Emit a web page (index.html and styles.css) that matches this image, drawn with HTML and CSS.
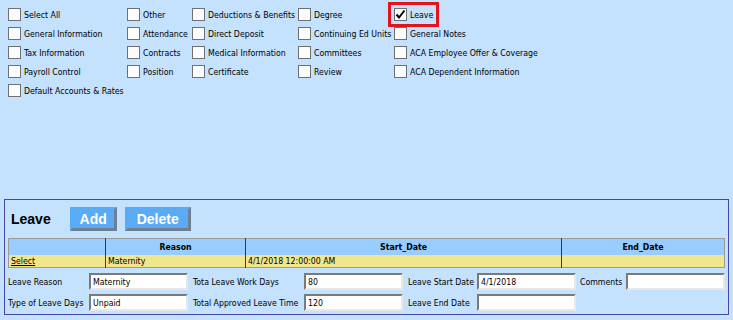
FILE: index.html
```html
<!DOCTYPE html>
<html>
<head>
    <title>Employee Sections</title>
    <link rel="stylesheet" href="styles.css">
</head>
<body>
    <div class="options">
        <label class="opt"><span class="box"></span>Select All</label>
        <label class="opt"><span class="box"></span>Other</label>
        <label class="opt"><span class="box"></span>Deductions &amp; Benefits</label>
        <label class="opt"><span class="box"></span>Degree</label>
        <label class="opt picked"><span class="box"><svg width="13" height="13" viewBox="0 0 13 13"><path d="M2.5 6.5 L5 9.5 L10.5 2.5" fill="none" stroke="#000" stroke-width="2"/></svg></span>Leave</label>

        <label class="opt"><span class="box"></span>General Information</label>
        <label class="opt"><span class="box"></span>Attendance</label>
        <label class="opt"><span class="box"></span>Direct Deposit</label>
        <label class="opt"><span class="box"></span>Continuing Ed Units</label>
        <label class="opt"><span class="box"></span>General Notes</label>

        <label class="opt"><span class="box"></span>Tax Information</label>
        <label class="opt"><span class="box"></span>Contracts</label>
        <label class="opt"><span class="box"></span>Medical Information</label>
        <label class="opt"><span class="box"></span>Committees</label>
        <label class="opt"><span class="box"></span>ACA Employee Offer &amp; Coverage</label>

        <label class="opt"><span class="box"></span>Payroll Control</label>
        <label class="opt"><span class="box"></span>Position</label>
        <label class="opt"><span class="box"></span>Certificate</label>
        <label class="opt"><span class="box"></span>Review</label>
        <label class="opt"><span class="box"></span>ACA Dependent Information</label>

        <label class="opt"><span class="box"></span>Default Accounts &amp; Rates</label>
    </div>

    <div class="panel">
        <div class="panel-head">
            <h2>Leave</h2>
            <button class="btn">Add</button>
            <button class="btn">Delete</button>
        </div>

        <table class="grid">
            <colgroup>
                <col class="c1"><col class="c2"><col class="c3"><col class="c4">
            </colgroup>
            <tr class="head">
                <th></th>
                <th>Reason</th>
                <th>Start_Date</th>
                <th>End_Date</th>
            </tr>
            <tr class="row">
                <td><a href="#">Select</a></td>
                <td>Maternity</td>
                <td>4/1/2018 12:00:00 AM</td>
                <td></td>
            </tr>
        </table>

        <div class="form">
            <span>Leave Reason</span>
            <input type="text" value="Maternity">
            <span>Tota Leave Work Days</span>
            <input type="text" value="80">
            <span>Leave Start Date</span>
            <input type="text" value="4/1/2018">
            <span>Comments</span>
            <input type="text" value="">

            <span>Type of Leave Days</span>
            <input type="text" value="Unpaid">
            <span>Total Approved Leave Time</span>
            <input type="text" value="120">
            <span>Leave End Date</span>
            <input type="text" value="">
        </div>
    </div>
</body>
</html>
```

FILE: styles.css
```css
/* Page */
body {
    margin: 0;
    background-color: #c4e1fd;
    font-family: "DejaVu Sans Condensed", "DejaVu Sans", sans-serif;
    font-stretch: condensed;
    font-size: 8.7px;
    color: #000;
}

/* Section checkboxes */
.options {
    display: grid;
    grid-template-columns: 119px 65px 106px 96px auto;
    grid-auto-rows: 19px;
    padding: 8px 0 0 8px;
}

.opt {
    display: flex;
    align-items: flex-end;
    justify-self: start;
    height: 13px;
    line-height: 11px;
    white-space: nowrap;
}

    .opt .box {
        width: 11px;
        height: 11px;
        border: 1px solid #707070;
        background-color: #fbfcfe;
        margin-right: 3px;
        flex: none;
    }

        .opt .box svg {
            display: block;
            margin: -1px;
        }

.picked {
    outline: 3px solid #e3141c;
    outline-offset: 3px;
    margin-left: 0;
}

/* Leave panel */
.panel {
    margin: 96px 4px 0 4px;
    border: 1px solid #4646aa;
    padding: 0 3px 3px 3px;
}

.panel-head {
    display: flex;
    align-items: center;
    height: 38px;
    padding-left: 3px;
}

    .panel-head h2 {
        margin: 0 19px 0 0;
        font-family: "Liberation Sans", Arial, sans-serif;
        font-stretch: normal;
        font-size: 14px;
        font-weight: bold;
    }

.btn {
    height: 24px;
    padding: 0;
    margin-right: 8px;
    border: 3px solid #5aabf6;
    border-right-color: #6f7f8f;
    border-bottom-color: #6f7f8f;
    background-color: #5aabf6;
    color: #fff;
    font-family: "Liberation Sans", Arial, sans-serif;
    font-size: 14px;
    font-weight: bold;
    line-height: 18px;
}

    .btn:nth-of-type(1) {
        width: 47px;
    }

    .btn:nth-of-type(2) {
        width: 66px;
    }

/* Results grid */
.grid {
    width: 100%;
    border-collapse: collapse;
    border: 1px solid #9a9a9a;
}

    .grid .c1 { width: 97px; }
    .grid .c2 { width: 140px; }
    .grid .c3 { width: 316px; }

    .grid th,
    .grid td {
        padding: 0 2px;
        white-space: nowrap;
    }

        .grid th + th,
        .grid td + td {
            border-left: 1px solid #3a3a3a;
        }

    .grid .head {
        background-color: #99ccff;
        height: 16px;
    }

        .grid .head th {
            font-weight: bold;
            text-align: center;
        }

    .grid .row {
        background-color: #f0e68c;
        height: 13px;
    }

        .grid .row td {
            text-align: left;
        }

        .grid .row a {
            color: #000;
            text-decoration: underline;
        }

/* Detail form */
.form {
    display: grid;
    grid-template-columns: 81px 104px 111px 104px 69px 103px 46px 99px;
    grid-auto-rows: 17px;
    row-gap: 4px;
    align-items: center;
    padding-top: 5px;
}

    .form span {
        white-space: nowrap;
    }

    .form input {
        width: 99px;
        height: 17px;
        box-sizing: border-box;
        margin: 0;
        padding: 0 2px;
        border: 2px solid #e8e8e8;
        border-top-color: #7a7a7a;
        border-left-color: #7a7a7a;
        background-color: #fff;
        font-family: inherit;
        font-stretch: condensed;
        font-size: 8.7px;
        color: #000;
    }
```
